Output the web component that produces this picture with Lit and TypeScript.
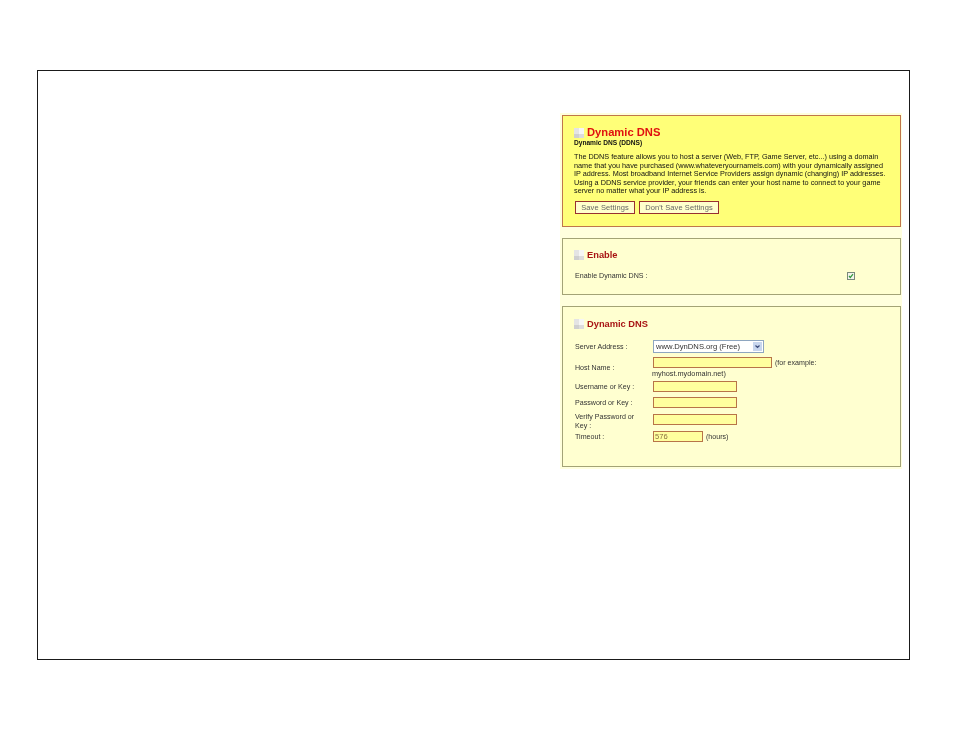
import { LitElement, html, css } from "lit";
import { customElement } from "lit/decorators.js";

@customElement("app-root")
export class AppRoot extends LitElement {
  static styles = css`
    :host { display: block; width: 954px; height: 737px; background: #fff; font-family: "Liberation Sans", Arial, sans-serif; color: #222; font-size: 7.1px; overflow: hidden; }
    .frame { box-sizing: border-box; margin: 70px 0 0 37px; width: 873px; height: 590px; border: 1px solid #1a1a1a; display: flex; justify-content: flex-end; align-items: flex-start; padding: 42px 7px 0 0; }
    .col { width: 342px; background: #ffffdd; box-sizing: border-box; padding: 2px 1px 2px 2px; display: flex; flex-direction: column; gap: 11px; filter: blur(0.3px); }
    .box { box-sizing: border-box; border: 1px solid #a3a376; background: #ffffd0; padding: 0 11px; }
    .box.hero { height: 112px; background: #ffff78; border-color: #c0764a; padding-top: 10px; }
    .box.en { height: 57px; padding-top: 10px; }
    .box.dns { height: 161px; padding-top: 11px; }
    h1, h2 { margin: 0; display: flex; align-items: center; gap: 3px; color: #a81414; font-size: 9.3px; font-weight: bold; line-height: 12px; }
    h1 { color: #e01010; font-size: 11.2px; line-height: 13px; }
    .ico { width: 10px; height: 10px; display: grid; grid-template-columns: 5px 5px; grid-template-rows: 6px 4px; flex: none; }
    .ico i { background: #e4e4e4; }
    .ico i:nth-child(2) { background: #f6f6f6; }
    .ico i:nth-child(3) { background: #cfcfcf; }
    .ico i:nth-child(4) { background: #dcdcdc; }
    .sub { font-weight: bold; font-size: 6.6px; line-height: 8px; color: #111; }
    p { margin: 6px 0 0; line-height: 8.5px; white-space: nowrap; color: #111; font-size: 7.28px; }
    .btns { display: flex; gap: 4px; margin: 5.5px 0 0 1px; }
    .btn { box-sizing: border-box; height: 13px; border: 1px solid #983030; background: #ffffcc; color: #666; font-size: 7.5px; line-height: 11px; text-align: center; letter-spacing: 0.1px; }
    .b1 { width: 60px; }
    .b2 { width: 80px; }
    .enrow { display: flex; justify-content: space-between; align-items: center; margin: 11px 0 0 1px; padding-right: 34px; color: #333; }
    .chk { box-sizing: border-box; width: 8px; height: 8px; border: 1px solid #7a8a7a; background: #f4f4ec; display: flex; }
    .rows { margin-top: 10px; display: flex; flex-direction: column; color: #333; }
    .row { display: grid; grid-template-columns: 79px 1fr; grid-template-rows: minmax(0, 1fr); align-items: center; }
    .lab { line-height: 9px; width: 64px; margin-left: 1px; padding-top: 1.5px; }
    .lab.w { width: 68px; padding-top: 5px; }
    .val { display: flex; align-items: center; gap: 3px; white-space: nowrap; }
    .stack { display: flex; flex-direction: column; }
    .wrapped { margin-left: -1px; line-height: 11px; font-size: 7.3px; }
    .input { box-sizing: border-box; height: 11px; border: 1px solid #b87448; background: #ffff9e; color: #8a7040; font-size: 7.6px; line-height: 9px; padding-left: 1px; }
    .w119 { width: 119px; }
    .w84 { width: 84px; }
    .w50 { width: 50px; }
    .select { box-sizing: border-box; width: 111px; height: 13px; border: 1px solid #8ea6c0; background: #fff; color: #333; font-size: 7.65px; line-height: 11px; padding-left: 2px; display: flex; justify-content: space-between; align-items: center; }
    .arrow { width: 9px; height: 9px; margin-right: 1px; background: #c8d6ee; display: flex; }
    svg { display: block; }
    .r1 { height: 13px; }
    .r2 { height: 22px; margin-top: 4px; }
    .r3 { height: 11px; margin-top: 2px; }
    .r4 { height: 11px; margin-top: 5px; }
    .r5 { height: 11px; margin-top: 6px; }
    .r6 { height: 11px; margin-top: 6px; }
  `;

  private icon() {
    return html`<span class="ico"><i></i><i></i><i></i><i></i></span>`;
  }

  render() {
    return html`
      <div class="frame">
        <div class="col">
          <section class="box hero">
            <h1>${this.icon()}Dynamic DNS</h1>
            <div class="sub">Dynamic DNS (DDNS)</div>
            <p>The DDNS feature allows you to host a server (Web, FTP, Game Server, etc...) using a domain<br />name that you have purchased (www.whateveryournameis.com) with your dynamically assigned<br />IP address. Most broadband Internet Service Providers assign dynamic (changing) IP addresses.<br />Using a DDNS service provider, your friends can enter your host name to connect to your game<br />server no matter what your IP address is.</p>
            <div class="btns"><div class="btn b1">Save Settings</div><div class="btn b2">Don't Save Settings</div></div>
          </section>
          <section class="box en">
            <h2>${this.icon()}Enable</h2>
            <div class="enrow">
              <span>Enable Dynamic DNS :</span>
              <span class="chk"><svg width="6" height="6" viewBox="0 0 6 6"><path d="M1 3l1.3 1.5L5 1.2" fill="none" stroke="#2f9a3a" stroke-width="1.2"/></svg></span>
            </div>
          </section>
          <section class="box dns">
            <h2>${this.icon()}Dynamic DNS</h2>
            <div class="rows">
              <div class="row r1"><span class="lab">Server Address :</span><span class="val"><span class="select">www.DynDNS.org (Free)<span class="arrow"><svg width="9" height="9" viewBox="0 0 9 9"><path d="M2.5 3.5l2 2 2-2" fill="none" stroke="#3a4a7a" stroke-width="1.2"/></svg></span></span></span></div>
              <div class="row r2"><span class="lab">Host Name :</span><span class="stack"><span class="val"><span class="input w119"></span>(for example:</span><span class="wrapped">myhost.mydomain.net)</span></span></div>
              <div class="row r3"><span class="lab">Username or Key :</span><span class="val"><span class="input w84"></span></span></div>
              <div class="row r4"><span class="lab">Password or Key :</span><span class="val"><span class="input w84"></span></span></div>
              <div class="row r5"><span class="lab w">Verify Password or Key :</span><span class="val"><span class="input w84"></span></span></div>
              <div class="row r6"><span class="lab">Timeout :</span><span class="val"><span class="input w50">576</span>(hours)</span></div>
            </div>
          </section>
        </div>
      </div>
    `;
  }
}
